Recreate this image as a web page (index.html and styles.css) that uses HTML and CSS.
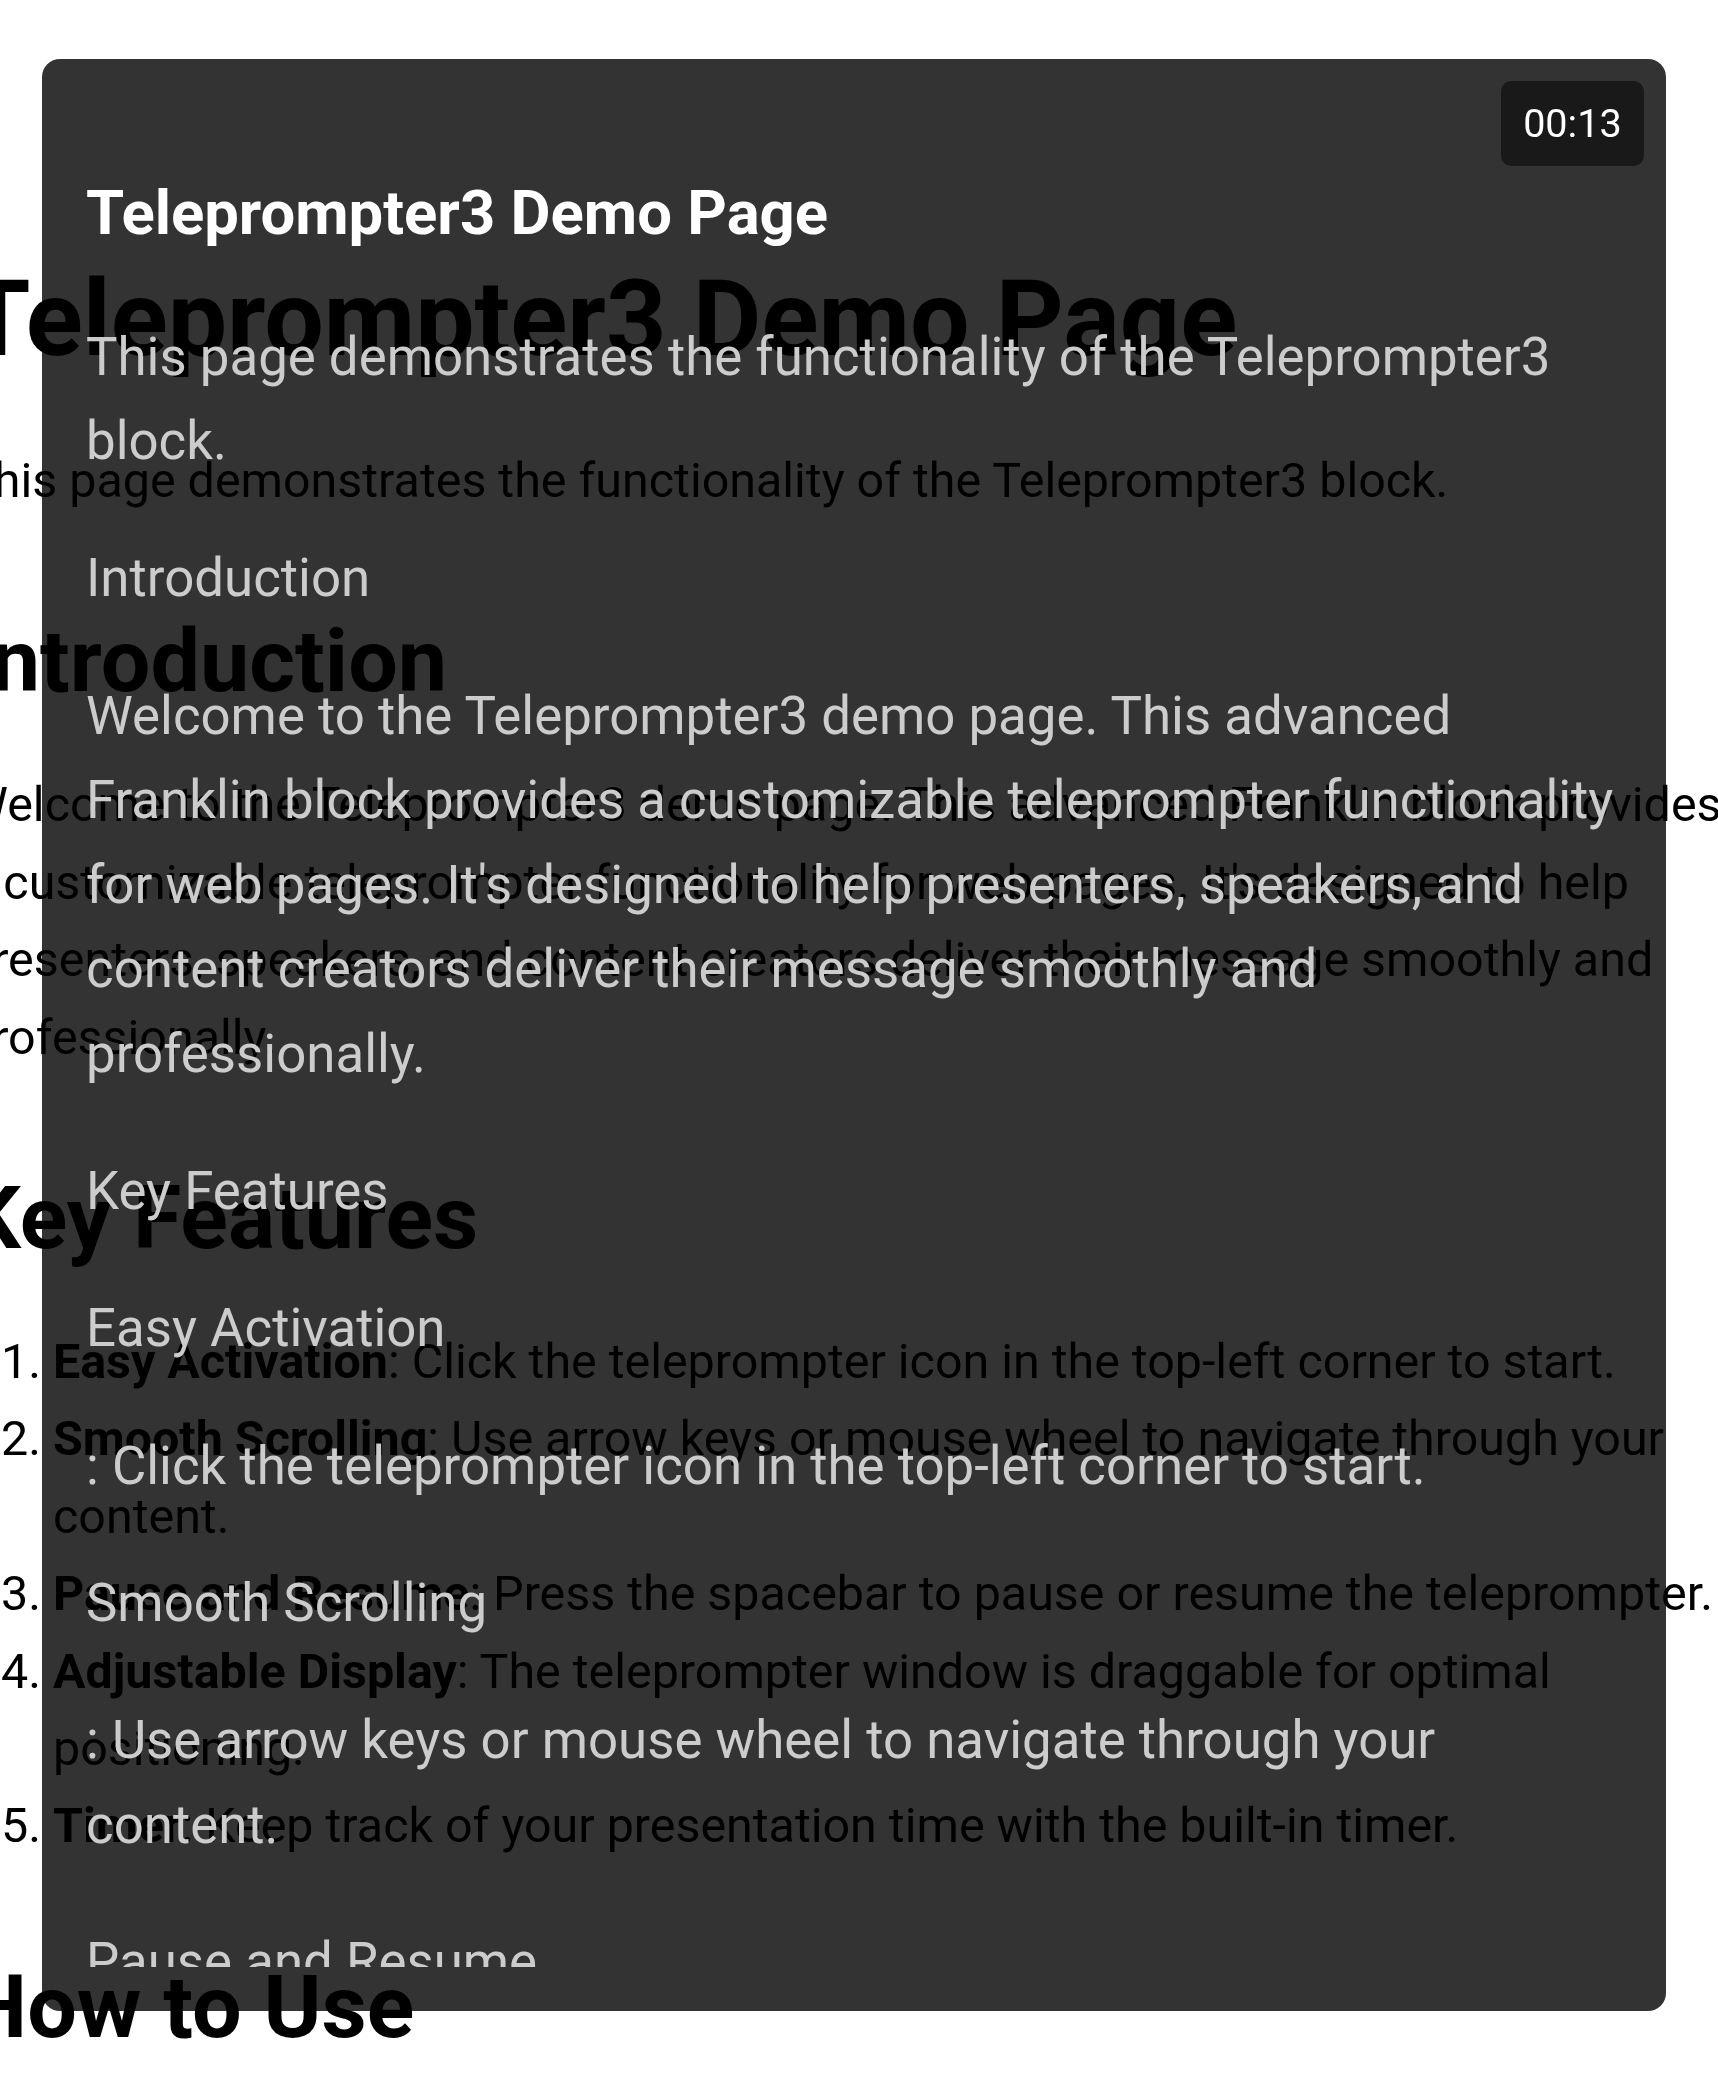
FILE: index.html
```html
<!DOCTYPE html>
<html lang="en">
<head>
<meta charset="utf-8">
<title>Teleprompter3 Demo Page</title>
<link rel="stylesheet" href="styles.css">
</head>
<body>
<main class="page">
  <h1 class="page-title">Teleprompter3 Demo Page</h1>
  <p class="page-text page-lead">This page demonstrates the functionality of the Teleprompter3 block.</p>
  <h2 class="page-heading">Introduction</h2>
  <p class="page-text">Welcome to the Teleprompter3 demo page. This advanced Franklin block provides a customizable teleprompter functionality for web pages. It's designed to help presenters, speakers, and content creators deliver their message smoothly and professionally.</p>
  <h2 class="page-heading">Key Features</h2>
  <ol class="page-list">
    <li><strong>Easy Activation</strong>: Click the teleprompter icon in the top-left corner to start.</li>
    <li><strong>Smooth Scrolling</strong>: Use arrow keys or mouse wheel to navigate through your content.</li>
    <li><strong>Pause and Resume</strong>: Press the spacebar to pause or resume the teleprompter.</li>
    <li><strong>Adjustable Display</strong>: The teleprompter window is draggable for optimal positioning.</li>
    <li><strong>Timer</strong>: Keep track of your presentation time with the built-in timer.</li>
  </ol>
  <h2 class="page-heading">How to Use</h2>
</main>
<div class="teleprompter">
  <div class="tp-timer">00:13</div>
  <div class="tp-content">
    <h1 class="tp-title">Teleprompter3 Demo Page</h1>
    <p class="tp-text">This page demonstrates the functionality of the Teleprompter3 block.</p>
    <p class="tp-text">Introduction</p>
    <p class="tp-text">Welcome to the Teleprompter3 demo page. This advanced Franklin block provides a customizable teleprompter functionality for web pages. It's designed to help presenters, speakers, and content creators deliver their message smoothly and professionally.</p>
    <p class="tp-text">Key Features</p>
    <p class="tp-text">Easy Activation</p>
    <p class="tp-text">: Click the teleprompter icon in the top-left corner to start.</p>
    <p class="tp-text">Smooth Scrolling</p>
    <p class="tp-text">: Use arrow keys or mouse wheel to navigate through your content.</p>
    <p class="tp-text">Pause and Resume</p>
    <p class="tp-text">: Press the spacebar to pause or resume the teleprompter.</p>
    <p class="tp-text">Adjustable Display</p>
    <p class="tp-text">: The teleprompter window is draggable for optimal positioning.</p>
  </div>
</div>
</body>
</html>
```

FILE: styles.css
```css
html,
body {
  margin: 0;
  padding: 0;
  height: 100%;
  overflow: hidden;
  background: #fff;
}

body {
  font-family: Roboto, "Noto Sans", "Liberation Sans", sans-serif;
  color: #000;
}

.page {
  width: 1775px;
  margin-left: -35px;
  padding-top: 253px;
}

.page-title {
  font-size: 105.6px;
  line-height: 132px;
  font-weight: 700;
  margin: 0 0 57px;
}

.page-text {
  font-size: 48.4px;
  line-height: 77.4px;
  margin: 0;
}

.page-heading {
  font-size: 88px;
  line-height: 110px;
  font-weight: 700;
  margin: 87px 0 50px;
}

.page-list {
  font-size: 48.4px;
  line-height: 77.4px;
  margin: 0;
  padding-left: 88px;
}

.teleprompter {
  position: fixed;
  left: 42px;
  top: 59px;
  width: 1623.7px;
  height: 1951.7px;
  box-sizing: border-box;
  padding: 44px;
  background: rgba(0, 0, 0, 0.8);
  border-radius: 18px;
  color: #ccc;
}

.tp-timer {
  position: absolute;
  top: 22px;
  right: 22px;
  padding: 19px 22px;
  background: rgba(0, 0, 0, 0.5);
  border-radius: 10px;
  color: #fff;
  font-size: 39.6px;
  line-height: normal;
}

.tp-content {
  height: 100%;
  overflow: hidden;
}

.tp-title {
  font-size: 61.6px;
  line-height: 73.92px;
  font-weight: 700;
  color: #fff;
  margin: 0 0 63.8px;
  padding-top: 74px;
}

.tp-text {
  font-size: 52.8px;
  line-height: 84.48px;
  margin: 52.8px 0;
}
```
